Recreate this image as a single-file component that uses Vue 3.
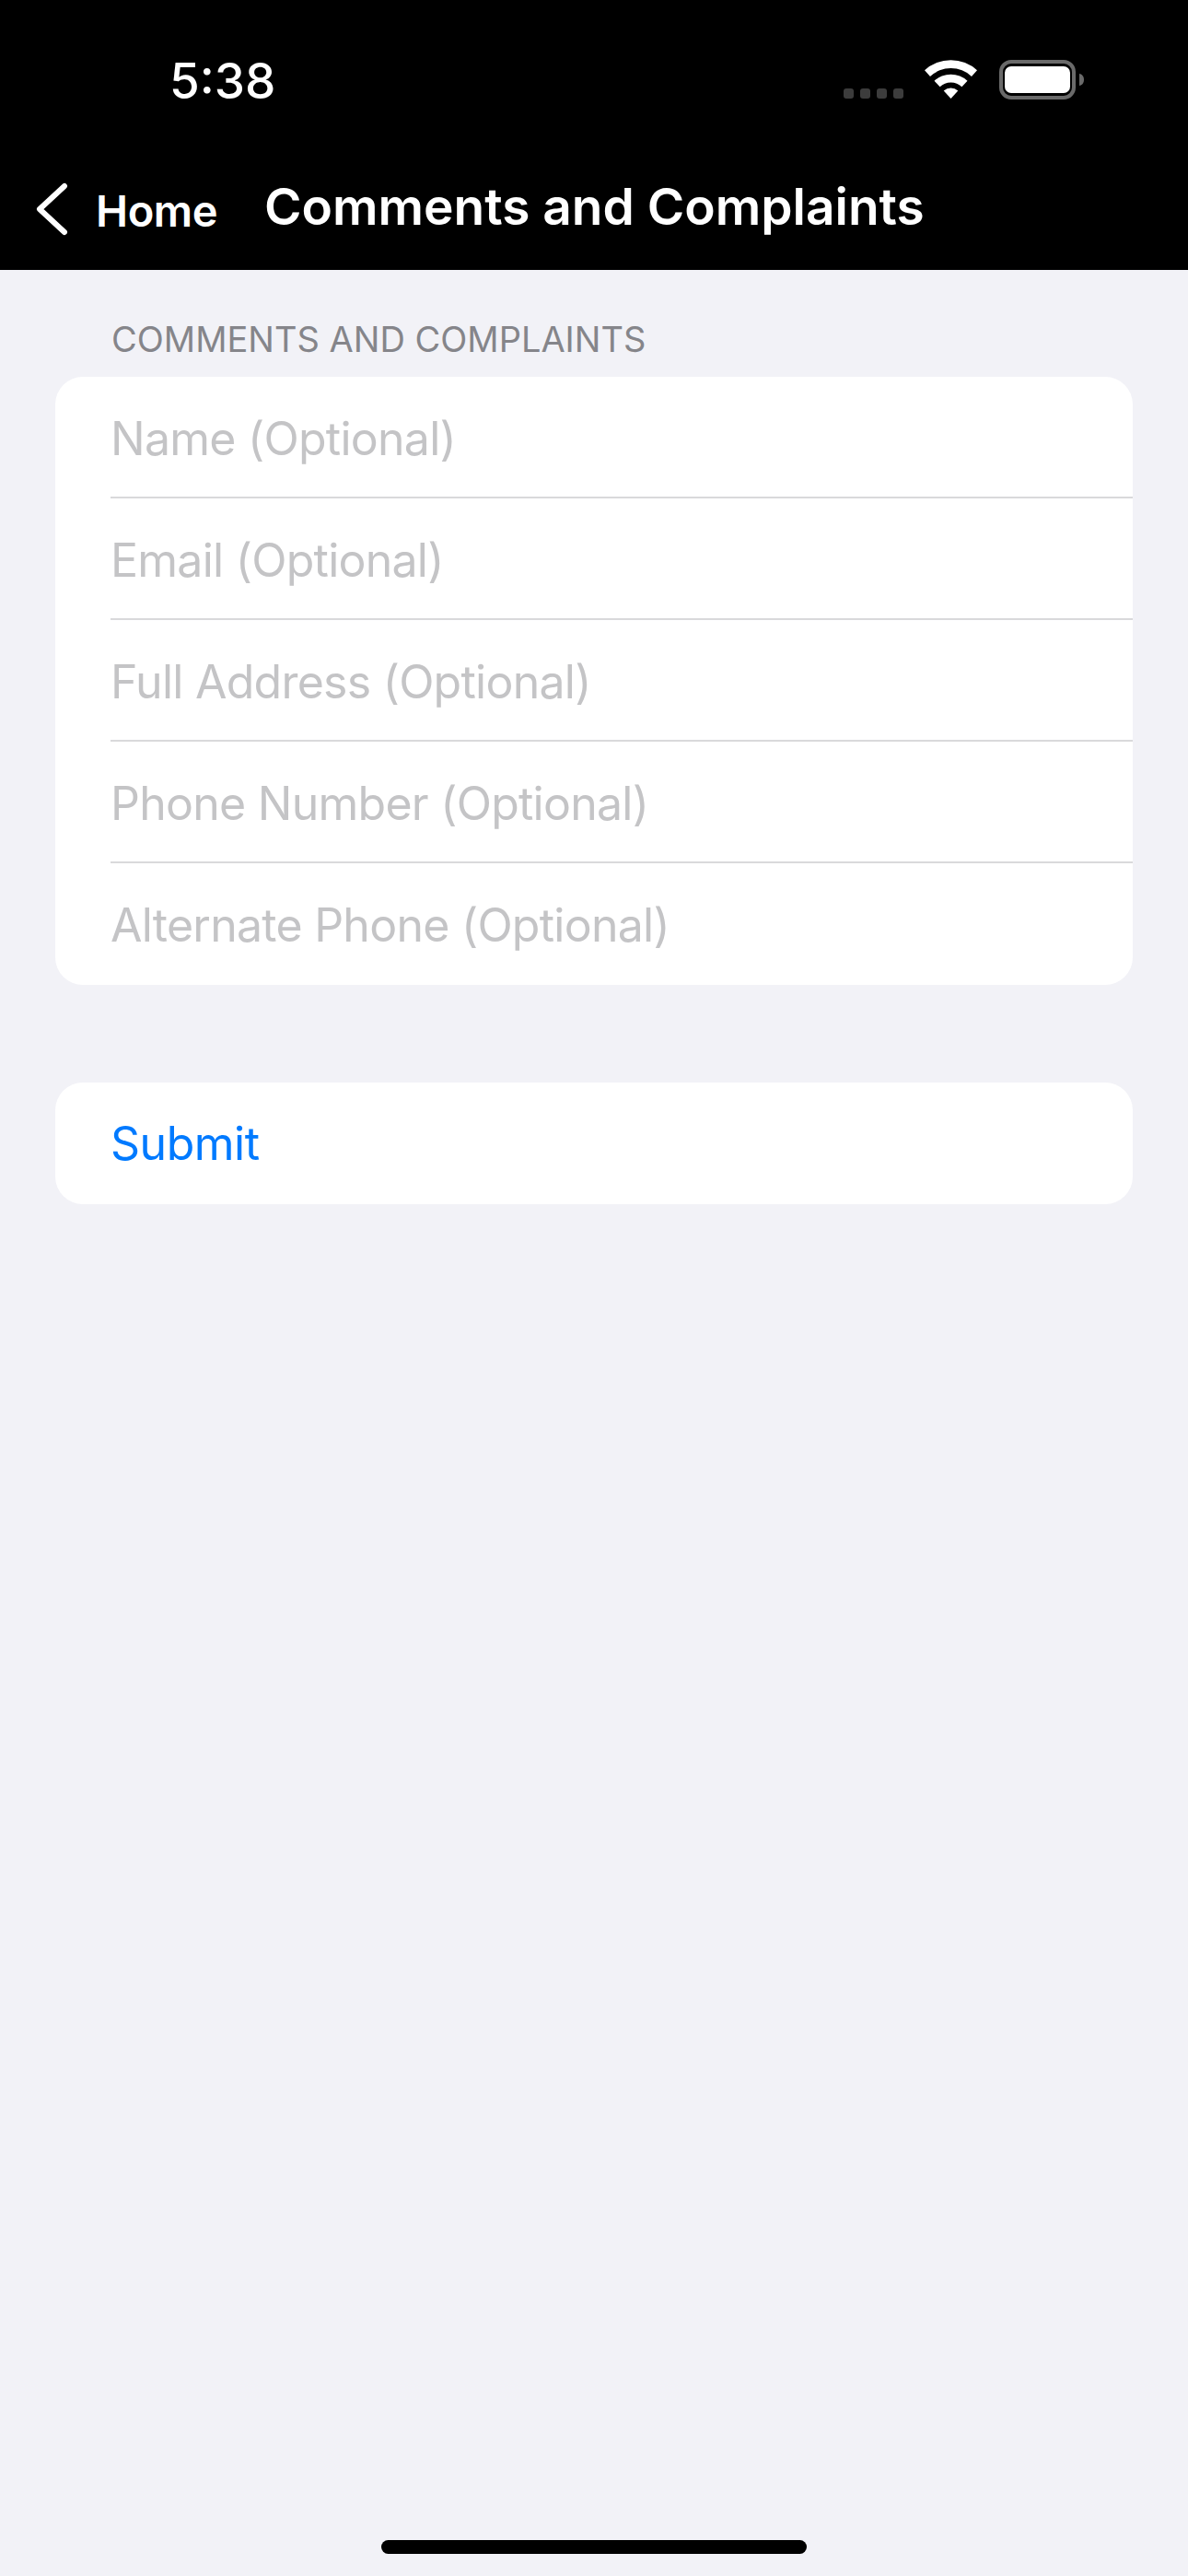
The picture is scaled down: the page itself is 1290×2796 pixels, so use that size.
<script setup>
import { ref } from 'vue';

const fields = ref([
    { id: 'name', label: 'Name (Optional)', value: '' },
    { id: 'email', label: 'Email (Optional)', value: '' },
    { id: 'address', label: 'Full Address (Optional)', value: '' },
    { id: 'phone', label: 'Phone Number (Optional)', value: '' },
    { id: 'alternate', label: 'Alternate Phone (Optional)', value: '' },
]);

const submitForm = () => {
    console.log('Submitted:', fields.value);
};
</script>

<template>
    <div class="screen">
        <header class="header">
            <div class="status-bar">
                <span class="time">5:38</span>
                <div class="status-icons">
                    <div class="signal">
                        <span v-for="n in 4" :key="n" class="dot"></span>
                    </div>
                    <svg class="wifi" width="57" height="42" viewBox="0 0 57 42">
                        <path d="M0 11.300A42 42 0 0 1 57 11.300L51 17.900A33 33 0 0 0 6 17.900Z" fill="#fff" />
                        <path d="M10.500 22.700A26.500 26.500 0 0 1 46.500 22.700L40.400 29.200A17.500 17.500 0 0 0 16.600 29.200Z" fill="#fff" />
                        <path d="M20.700 33.600A11.500 11.500 0 0 1 36.300 33.600L28.500 42Z" fill="#fff" />
                    </svg>
                    <svg class="battery" width="92" height="43" viewBox="0 0 92 43">
                        <rect x="2" y="2" width="79" height="39" rx="11" fill="none" stroke="#6a6a6a" stroke-width="4" />
                        <rect x="6" y="7" width="71" height="29" rx="7" fill="#fff" />
                        <path d="M87 15c3 .5 5 3 5 6.500s-2 6-5 6.500z" fill="#6a6a6a" />
                    </svg>
                </div>
            </div>
            <nav class="nav-bar">
                <a class="back" href="#">
                    <svg width="40" height="60" viewBox="0 0 40 60">
                        <path d="M34 6L7 31l27 25" fill="none" stroke="#fff" stroke-width="6" stroke-linecap="round" stroke-linejoin="round" />
                    </svg>
                    <span>Home</span>
                </a>
                <h1 class="title">Comments and Complaints</h1>
            </nav>
        </header>

        <main class="content">
            <h2 class="section-title">COMMENTS AND COMPLAINTS</h2>
            <form class="card" @submit.prevent="submitForm">
                <div v-for="field in fields" :key="field.id" class="row">
                    <input v-model="field.value" class="field" type="text" :placeholder="field.label" />
                </div>
            </form>
            <div class="card submit-card">
                <button class="submit" type="button" @click="submitForm">Submit</button>
            </div>
        </main>

        <div class="home-bar"></div>
    </div>
</template>

<style scoped>
.screen {
    display: flex;
    flex-direction: column;
    height: 2796px;
    background-color: #f2f2f7;
    font-family: Inter, "Liberation Sans", sans-serif;
}

.header {
    height: 293px;
    background-color: #000;
    color: #fff;
}

.status-bar {
    display: flex;
    justify-content: space-between;
    height: 196px;
    padding: 57px 113px 0 184px;
    box-sizing: border-box;
}

.time {
    font-size: 53px;
    line-height: 63px;
    font-weight: 500;
}

.status-icons {
    display: flex;
    align-items: flex-start;
    padding-top: 8px;
}

.signal {
    display: flex;
    gap: 7px;
    margin-top: 31px;
    margin-right: 23px;
}

.dot {
    width: 11px;
    height: 11px;
    border-radius: 3px;
    background-color: #3c3c3c;
}

.wifi {
    margin-right: 24px;
}

.nav-bar {
    display: flex;
    align-items: center;
    height: 60px;
    padding-left: 36px;
}

.back {
    display: flex;
    align-items: center;
    width: 251px;
    color: #fff;
    text-decoration: none;
    font-size: 47px;
    font-weight: 600;
    letter-spacing: -0.4px;
}

.back span {
    margin-left: 28px;
    padding-top: 4px;
}

.title {
    margin: 0 0 5px;
    font-size: 55px;
    font-weight: 600;
    white-space: nowrap;
}

.content {
    flex: 1;
    padding: 0 60px;
}

.section-title {
    margin: 0;
    padding: 52px 0 0 61px;
    height: 116px;
    box-sizing: border-box;
    font-size: 38px;
    line-height: 46px;
    font-weight: 400;
    color: #85858a;
}

.card {
    background-color: #fff;
    border-radius: 30px;
    overflow: hidden;
}

.row {
    display: flex;
    align-items: center;
    height: 132px;
    margin-left: 60px;
    box-sizing: border-box;
}

.row + .row {
    box-shadow: 0 -2px 0 #d9d9db;
}

.field {
    width: 100%;
    padding: 2px 0 0;
    border: 0;
    outline: 0;
    background: transparent;
    font-family: inherit;
    font-size: 50px;
    letter-spacing: -0.75px;
    color: #000;
}

.field::placeholder {
    color: #c4c4c6;
    opacity: 1;
}

.submit-card {
    margin-top: 106px;
}

.submit {
    display: block;
    width: 100%;
    height: 132px;
    padding: 0 0 0 60px;
    border: 0;
    background: transparent;
    text-align: left;
    font-family: inherit;
    font-size: 50px;
    letter-spacing: -0.5px;
    color: #007aff;
}

.home-bar {
    width: 462px;
    height: 15px;
    margin: 0 auto 24px;
    border-radius: 8px;
    background-color: #000;
}
</style>
